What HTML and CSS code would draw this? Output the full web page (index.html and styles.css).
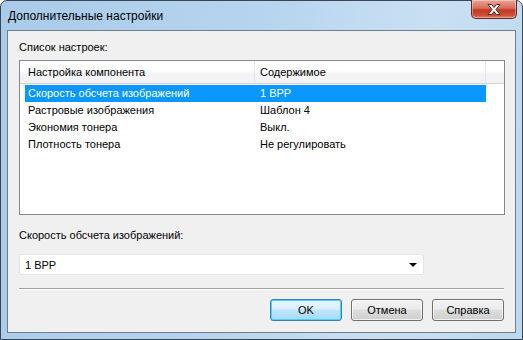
FILE: index.html
```html
<!DOCTYPE html>
<html lang="ru">
<head>
    <meta charset="UTF-8">
    <link rel="stylesheet" href="styles.css">
    <title>Дополнительные настройки</title>
</head>
<body>
    <div class="window">
        <div class="titlebar">
            <span class="title">Дополнительные настройки</span>
            <button class="close" title="Закрыть">
                <svg width="16" height="13" viewBox="0 0 16 13">
                    <path d="M2 1.5h3.6l2.4 3 2.4-3H14l-4 5 4 5h-3.6l-2.4-3-2.4 3H2l4-5z" fill="#fff" stroke="#4a2a26" stroke-width="1"/>
                </svg>
            </button>
        </div>
        <div class="client">
            <div class="label first">Список настроек:</div>
            <div class="listview">
                <div class="header">
                    <div class="col col1">Настройка компонента</div>
                    <div class="col col2">Содержимое</div>
                    <div class="col col3"></div>
                </div>
                <div class="row selected">
                    <div class="cell col1">Скорость обсчета изображений</div>
                    <div class="cell col2">1 BPP</div>
                </div>
                <div class="row">
                    <div class="cell col1">Растровые изображения</div>
                    <div class="cell col2">Шаблон 4</div>
                </div>
                <div class="row">
                    <div class="cell col1">Экономия тонера</div>
                    <div class="cell col2">Выкл.</div>
                </div>
                <div class="row">
                    <div class="cell col1">Плотность тонера</div>
                    <div class="cell col2">Не регулировать</div>
                </div>
            </div>
            <div class="label second">Скорость обсчета изображений:</div>
            <div class="combo">
                <span>1 BPP</span>
                <span class="arrow"></span>
            </div>
            <div class="separator"></div>
            <div class="buttons">
                <button class="btn default">OK</button>
                <button class="btn">Отмена</button>
                <button class="btn">Справка</button>
            </div>
        </div>
    </div>
</body>
</html>
```

FILE: styles.css
```css
body {
    margin: 0;
    font-family: 'Liberation Sans', Arial, sans-serif;
    font-size: 11px;
    color: #000;
    background-color: #fff;
}

.window {
    width: 523px;
    height: 340px;
    box-sizing: border-box;
    border: 1px solid #3b4654;
    border-radius: 7px 7px 0 0;
    background: linear-gradient(100deg, #a9cbe9 0%, #b6d4ee 45%, #c9e0f3 75%, #bcd8ef 100%);
    padding: 0 6px 6px 6px;
    display: flex;
    flex-direction: column;
}

.titlebar {
    height: 29px;
    display: flex;
    align-items: flex-start;
    justify-content: space-between;
}

.title {
    font-size: 12px;
    margin-top: 8px;
    margin-left: 1px;
}

.close {
    width: 46px;
    height: 19px;
    margin-top: -1px;
    margin-right: -1px;
    padding: 0;
    border: 1px solid #5c2c28;
    border-top: none;
    border-radius: 0 0 5px 5px;
    background: linear-gradient(#e9a597 0%, #d96d5a 45%, #c13b22 55%, #d14d35 85%, #e77e62 100%);
    display: flex;
    align-items: center;
    justify-content: center;
    box-shadow: inset 0 0 0 1px rgba(255, 255, 255, 0.35);
}

.client {
    flex: 1;
    border: 1px solid #6f7c8a;
    background-color: #f0f0f0;
    padding: 0 10px 0 11px;
    display: flex;
    flex-direction: column;
}

.label {
    height: 13px;
    line-height: 13px;
}

.label.first {
    margin-top: 10px;
}

.label.second {
    margin-top: 14px;
}

.listview {
    margin-top: 6px;
    height: 155px;
    box-sizing: border-box;
    border: 1px solid #828790;
    background-color: #fff;
}

.header {
    display: flex;
    height: 23px;
    box-sizing: border-box;
    border-bottom: 1px solid #d5d5d5;
    background: linear-gradient(#fff 0%, #fff 45%, #f3f4f6 55%, #f1f2f4 100%);
}

.header .col {
    line-height: 22px;
    box-sizing: border-box;
    border-right: 1px solid #e3e8ee;
}

.col1 {
    width: 235px;
    padding-left: 8px;
}

.col2 {
    width: 231px;
    padding-left: 5px;
}

.header .col3 {
    flex: 1;
    border-right: none;
}

.row {
    display: flex;
    height: 17px;
    line-height: 17px;
    margin-left: 5px;
    width: 461px;
}

.header + .row {
    margin-top: 1px;
}

.row .col1 {
    width: 230px;
    padding-left: 3px;
    box-sizing: border-box;
}

.row .col2 {
    box-sizing: border-box;
}

.row.selected {
    background-color: #0a98ff;
    color: #fff;
}

.combo {
    margin-top: 12px;
    width: 405px;
    height: 21px;
    box-sizing: border-box;
    border: 1px solid #e1e6ec;
    border-radius: 2px;
    background-color: #fff;
    display: flex;
    align-items: center;
    justify-content: space-between;
    padding: 0 6px 0 5px;
}

.arrow {
    width: 0;
    height: 0;
    border-left: 4px solid transparent;
    border-right: 4px solid transparent;
    border-top: 4px solid #000;
}

.separator {
    margin-top: 13px;
    height: 1px;
    background-color: #a0a0a0;
    border-bottom: 1px solid #fff;
    width: 485px;
}

.buttons {
    margin-top: 9px;
    display: flex;
    justify-content: flex-end;
    gap: 9px;
    padding-right: 1px;
}

.btn {
    width: 72px;
    height: 22px;
    font-family: 'Liberation Sans', Arial, sans-serif;
    font-size: 11px;
    color: #000;
    border: 1px solid #707070;
    border-radius: 3px;
    background: linear-gradient(#f2f2f2 0%, #ebebeb 45%, #dddddd 50%, #cfcfcf 100%);
    box-shadow: inset 0 0 0 1px rgba(255, 255, 255, 0.7);
    padding: 0;
}

.btn.default {
    border-color: #3c7fb1;
    background: linear-gradient(#eaf6fd 0%, #d9f0fc 45%, #bee6fd 50%, #a7d9f5 100%);
    box-shadow: inset 0 0 0 1px #48d4f7;
}
```
